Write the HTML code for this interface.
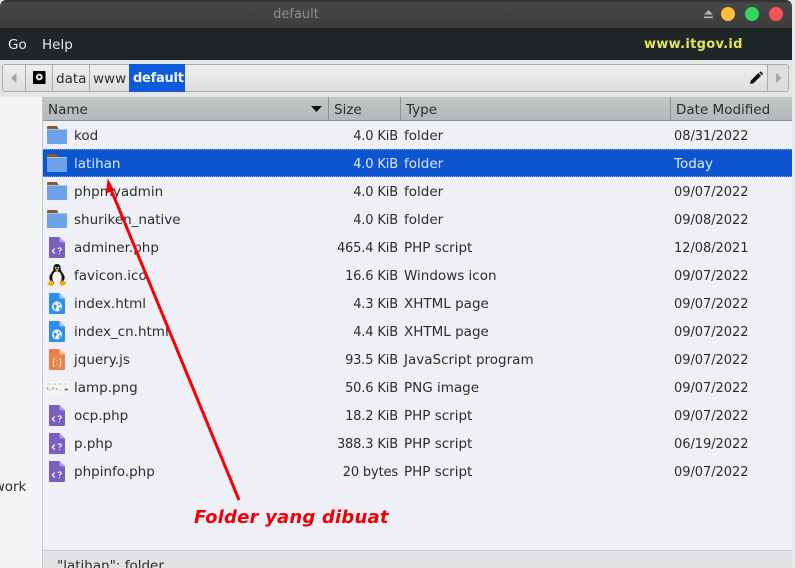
<!DOCTYPE html>
<html><head><meta charset="utf-8"><style>
html,body{margin:0;padding:0;background:#e8e9ea}
#w{position:relative;width:795px;height:568px;overflow:hidden;background:#e8e9ea;font-family:"DejaVu Sans",sans-serif;font-size:13.5px;color:#2a2c2e}
#w div,#w span.t{position:absolute;white-space:nowrap}
.t{line-height:18px;height:18px;margin-top:1px}
.r{text-align:right;font-size:13px;letter-spacing:-.15px;margin-top:2px}
.d{font-size:13px;letter-spacing:-.05px;margin-top:2px}
.s{color:#dfe9fb}
svg{position:absolute;overflow:visible}
</style></head><body><div id="w">
<div style="left:0;top:0;width:792px;height:28px;background:linear-gradient(#2c2d2d,#474747 12%,#3c3c3c);border-radius:6px 6px 0 0"></div>
<div style="left:0;top:6px;width:592px;text-align:center;color:#8f8f8f;font-size:13px;line-height:18px">default</div>
<svg style="left:703px;top:9px" width="12" height="10"><path d="M1 5.500L5.500 1 10 5.500z M1 7.500h9v1.600H1z" fill="#b5b5b5"/></svg>
<div style="left:721px;top:7px;width:14px;height:14px;border-radius:50%;background:#fdbd3a"></div>
<div style="left:745px;top:7px;width:14px;height:14px;border-radius:50%;background:#32d65f"></div>
<div style="left:769px;top:7px;width:14px;height:14px;border-radius:50%;background:#f55259"></div>

<div style="left:0;top:28px;width:792px;height:32px;background:#1f2628"></div>
<div class="t" style="left:8px;top:35px;color:#e8e8e8">Go</div>
<div class="t" style="left:42px;top:35px;color:#e8e8e8">Help</div>
<div style="left:644px;top:36px;color:#e4e45a;font-weight:bold;font-size:13px;line-height:18px;letter-spacing:.3px">www.itgov.id</div>

<div style="left:0;top:60px;width:792px;height:37px;background:#e3e5e7"></div>
<div style="left:2px;top:64px;width:785px;height:26px;border:1px solid #a9acae;border-radius:3px;background:linear-gradient(#eceef0,#dcdee0)"></div>
<div style="left:767px;top:65px;width:1px;height:26px;background:#a9acae"></div>
<div style="left:768px;top:65px;width:19px;height:26px;background:#dcdee0"></div>
<div style="left:25px;top:65px;width:1px;height:26px;background:#a9acae"></div>
<div style="left:52px;top:65px;width:1px;height:26px;background:#a9acae"></div>
<div style="left:89px;top:65px;width:1px;height:26px;background:#a9acae"></div>
<svg style="left:10px;top:72px" width="8" height="12"><path d="M6.500 1L1 6l5.500 5z" fill="#a2a5a8"/></svg>
<svg style="left:775px;top:72px" width="8" height="12"><path d="M1 1l5.500 5L1 11z" fill="#a2a5a8"/></svg>
<svg style="left:33px;top:71px" width="13" height="14"><rect width="12.500" height="13" fill="#000" rx=".6"/><circle cx="6.300" cy="6" r="3.400" fill="#e8e8e8"/><circle cx="6.300" cy="6" r="1.400" fill="#000"/></svg>
<div class="t" style="left:56px;top:69px">data</div>
<div class="t" style="left:93px;top:69px">www</div>
<div style="left:129px;top:64px;width:56px;height:28px;background:#0f5ad8"></div>
<div class="t" style="left:133px;top:69px;color:#f2f6ff;font-weight:bold;font-size:13px;letter-spacing:-.25px">default</div>
<svg style="left:749px;top:71px" width="15" height="14"><path d="M1 13l.8-3.400 7.600-7.600 2.700 2.700-7.600 7.600z M10.200 1.200l.8-.6q.6-.3 1.100.2l1.500 1.500q.5.500.1 1.100l-.7.800z" fill="#0c0c0c"/></svg>

<div style="left:0;top:97px;width:42px;height:471px;background:#f3f5f7"></div>
<div style="left:42px;top:97px;width:1px;height:471px;background:#c4c6c9"></div>
<div style="left:43px;top:97px;width:749px;height:453px;background:#eff0f5"></div>
<div class="t" style="left:-30px;top:477px">Network</div>

<div style="left:43px;top:97px;width:749px;height:23px;background:linear-gradient(#c3c6c7,#b5b8ba);border-bottom:1px solid #8d9092"></div>
<div style="left:328px;top:97px;width:1px;height:24px;background:#8f9294"></div>
<div style="left:400px;top:97px;width:1px;height:24px;background:#8f9294"></div>
<div style="left:670px;top:97px;width:1px;height:24px;background:#8f9294"></div>
<div class="t" style="left:48px;top:100px">Name</div>
<div class="t" style="left:334px;top:100px">Size</div>
<div class="t" style="left:406px;top:100px">Type</div>
<div class="t" style="left:676px;top:100px">Date Modified</div>
<svg style="left:311px;top:106px" width="12" height="7"><path d="M0 0h11L5.500 6z" fill="#111"/></svg>

<div style="left:43px;top:149px;width:749px;height:26px;background:#0d55cf;border-top:1px dotted #7fa4e6;border-bottom:1px dotted #7fa4e6"></div>

<svg style="left:0;top:0" width="795" height="568">
<defs>
<g id="f"><path d="M0 1.500Q0 0 1.500 0H10l1.500 3H0z" fill="#8a5a24"/><path d="M0 3.500h20V17q0 1-1 1H1q-1 0-1-1z" fill="#6ca3e8"/><rect y="3" width="20" height="1" fill="#a5c5ee"/></g>
<g id="p"><path d="M0 1q0-1 1-1h9.500L16 5.500V20q0 1-1 1H1q-1 0-1-1z" fill="#7b5ec0"/><path d="M10.500 0L16 5.500h-4.500q-1 0-1-1z" fill="#b19be0"/><path d="M5.800 11.500L3.300 14l2.500 2.500" fill="none" stroke="#fff" stroke-width="1.200"/><path d="M9 11.800q.6-.9 1.700-.9 1.500 0 1.500 1.300 0 .8-1 1.300-.7.400-.7 1.100M10.500 16.100v1" fill="none" stroke="#fff" stroke-width="1.100"/></g>
<g id="h"><path d="M0 1q0-1 1-1h9.500L16 5.500V20q0 1-1 1H1q-1 0-1-1z" fill="#2f8fe8"/><path d="M10.500 0L16 5.500h-4.500q-1 0-1-1z" fill="#9ccbf5"/><circle cx="8" cy="13.500" r="5" fill="#f2f7fd"/><path d="M4.500 11.500l2.500.5 1 1.800-1.500 1.500.3 2.200-1.800-2zM9 9.500l2 2.500-1.800.6zM10 14.500l2.300-.3-1 2.500-1.500.3z" fill="#2f8fe8"/></g>
</defs>
<use href="#f" x="47" y="126"/><use href="#f" x="47" y="154"/><use href="#f" x="47" y="182"/><use href="#f" x="47" y="210"/>
<use href="#p" x="49" y="237"/>
<g transform="translate(47,264)"><path d="M10 0c-3 0-3.800 2.500-3.600 5 .1 2-3.400 4.500-4 8-.3 2 1 4.500 2.600 5.500h10c1.600-1 2.900-3.500 2.600-5.500-.6-3.500-4.100-6-4-8C13.800 2.500 13 0 10 0z" fill="#15151a"/><ellipse cx="10" cy="13.500" rx="4.700" ry="6.200" fill="#f6f6f2"/><circle cx="8.700" cy="3.600" r=".8" fill="#eee"/><circle cx="11.300" cy="3.600" r=".8" fill="#eee"/><path d="M7.800 5.200q2.200-1 4.400 0L10 7.200z" fill="#e9a51d"/><path d="M0 19l4.800-2.800 2.800 3.300-1.800 2.300H2.500zM20 19l-4.800-2.800-2.800 3.300 1.800 2.300h2.500z" fill="#eeb01f"/></g>
<use href="#h" x="49" y="293"/><use href="#h" x="49" y="321"/>
<g transform="translate(49,349)"><path d="M0 1q0-1 1-1h9.500L16 5.500V20q0 1-1 1H1q-1 0-1-1z" fill="#e9814a"/><path d="M10.500 0L16 5.500h-4.500q-1 0-1-1z" fill="#f4bd9c"/><path d="M6 9.500q-1.500 0-1.500 1.500v1.300q0 1-.9 1.200.9.200.9 1.200V16q0 1.500 1.500 1.500M10 9.500q1.500 0 1.500 1.500v1.300q0 1 .9 1.200-.9.200-.9 1.200V16q0 1.500-1.500 1.500" fill="none" stroke="#f9e3d5" stroke-width="1"/><path d="M8 11.500v.8M8 15v.8" stroke="#f9e3d5" stroke-width="1.200"/></g>
<g transform="translate(45,381)"><rect width="24" height="12" fill="#f6f6f4"/><path d="M2 3h4M8 3h3M13 3h4M19 3h3M3 9h3M15 9h2" stroke="#c4c4c4" stroke-width="1"/><path d="M2.500 6v3" stroke="#a8a8a8" stroke-width="1.200"/><path d="M8 6v3" stroke="#d08080" stroke-width="1.200"/><path d="M11.500 7v2" stroke="#9a9a9a" stroke-width="1.200"/><path d="M19.500 8.500h3.500" stroke="#555" stroke-width="1.500"/></g>
<use href="#p" x="49" y="405"/><use href="#p" x="49" y="433"/><use href="#p" x="49" y="461"/>
</svg>

<div class="t" style="left:74px;top:126px">kod</div>
<div class="t s" style="left:74px;top:154px">latihan</div>
<div class="t" style="left:74px;top:182px">phpmyadmin</div>
<div class="t" style="left:74px;top:210px">shuriken_native</div>
<div class="t" style="left:74px;top:238px">adminer.php</div>
<div class="t" style="left:74px;top:266px">favicon.ico</div>
<div class="t" style="left:74px;top:294px">index.html</div>
<div class="t" style="left:74px;top:322px">index_cn.html</div>
<div class="t" style="left:74px;top:350px">jquery.js</div>
<div class="t" style="left:74px;top:378px">lamp.png</div>
<div class="t" style="left:74px;top:406px">ocp.php</div>
<div class="t" style="left:74px;top:434px">p.php</div>
<div class="t" style="left:74px;top:462px">phpinfo.php</div>

<div class="t r" style="left:298px;width:100px;top:126px">4.0 KiB</div>
<div class="t r s" style="left:298px;width:100px;top:154px">4.0 KiB</div>
<div class="t r" style="left:298px;width:100px;top:182px">4.0 KiB</div>
<div class="t r" style="left:298px;width:100px;top:210px">4.0 KiB</div>
<div class="t r" style="left:298px;width:100px;top:238px">465.4 KiB</div>
<div class="t r" style="left:298px;width:100px;top:266px">16.6 KiB</div>
<div class="t r" style="left:298px;width:100px;top:294px">4.3 KiB</div>
<div class="t r" style="left:298px;width:100px;top:322px">4.4 KiB</div>
<div class="t r" style="left:298px;width:100px;top:350px">93.5 KiB</div>
<div class="t r" style="left:298px;width:100px;top:378px">50.6 KiB</div>
<div class="t r" style="left:298px;width:100px;top:406px">18.2 KiB</div>
<div class="t r" style="left:298px;width:100px;top:434px">388.3 KiB</div>
<div class="t r" style="left:298px;width:100px;top:462px">20 bytes</div>

<div class="t" style="left:404px;top:126px">folder</div>
<div class="t s" style="left:404px;top:154px">folder</div>
<div class="t" style="left:404px;top:182px">folder</div>
<div class="t" style="left:404px;top:210px">folder</div>
<div class="t" style="left:404px;top:238px">PHP script</div>
<div class="t" style="left:404px;top:266px">Windows icon</div>
<div class="t" style="left:404px;top:294px">XHTML page</div>
<div class="t" style="left:404px;top:322px">XHTML page</div>
<div class="t" style="left:404px;top:350px">JavaScript program</div>
<div class="t" style="left:404px;top:378px">PNG image</div>
<div class="t" style="left:404px;top:406px">PHP script</div>
<div class="t" style="left:404px;top:434px">PHP script</div>
<div class="t" style="left:404px;top:462px">PHP script</div>

<div class="t d" style="left:674px;top:126px">08/31/2022</div>
<div class="t s" style="left:674px;top:154px">Today</div>
<div class="t d" style="left:674px;top:182px">09/07/2022</div>
<div class="t d" style="left:674px;top:210px">09/08/2022</div>
<div class="t d" style="left:674px;top:238px">12/08/2021</div>
<div class="t d" style="left:674px;top:266px">09/07/2022</div>
<div class="t d" style="left:674px;top:294px">09/07/2022</div>
<div class="t d" style="left:674px;top:322px">09/07/2022</div>
<div class="t d" style="left:674px;top:350px">09/07/2022</div>
<div class="t d" style="left:674px;top:378px">09/07/2022</div>
<div class="t d" style="left:674px;top:406px">09/07/2022</div>
<div class="t d" style="left:674px;top:434px">06/19/2022</div>
<div class="t d" style="left:674px;top:462px">09/07/2022</div>

<div style="left:43px;top:550px;width:749px;height:18px;background:#e0e2e4;border-top:1px solid #c9cbcd"></div>
<div class="t" style="left:57px;top:556px">"latihan": folder</div>

<svg style="left:0;top:0" width="795" height="568"><path d="M239 500L110 187" stroke="#f60008" stroke-width="3" fill="none"/><path d="M108 180l-1.500 13 7-3z" fill="#f60008" stroke="#f60008" stroke-width="1"/></svg>
<div style="left:194px;top:506px;color:#ee0008;font-weight:bold;font-style:italic;font-size:18px;line-height:24px;letter-spacing:.2px">Folder yang dibuat</div>
</div></body></html>
